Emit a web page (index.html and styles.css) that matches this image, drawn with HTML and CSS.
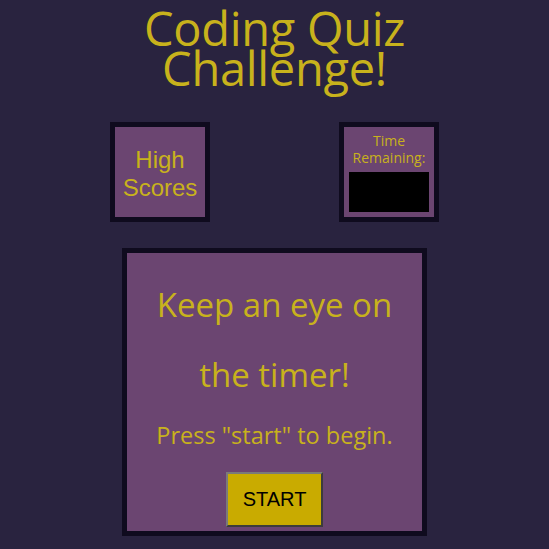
FILE: index.html
```html
<!DOCTYPE html>
<html>
<head>
<meta charset="utf-8">
<link rel="stylesheet" href="styles.css">
</head>
<body>
<header class="title">Coding Quiz<br>Challenge!</header>
<div class="top-row">
  <div class="box scores">High<br>Scores</div>
  <div class="box timer">
    <div class="timer-label">Time<br>Remaining:</div>
    <div class="timer-display"></div>
  </div>
</div>
<main class="card">
  <p class="headline">Keep an eye on</p>
  <p class="headline">the timer!</p>
  <p class="sub">Press "start" to begin.</p>
  <button class="start">START</button>
</main>
</body>
</html>
```
FILE: styles.css
```css
html, body {
  margin: 0;
  padding: 0;
  background: #29233f;
  height: 100%;
}
body {
  font-family: "Open Sans", "Noto Sans", sans-serif;
  color: #c8b21c;
}
.title {
  text-align: center;
  font-size: 47px;
  line-height: 40px;
  padding-top: 8px;
  letter-spacing: -0.3px;
}
.top-row {
  display: flex;
  justify-content: center;
  gap: 129px;
  margin-top: 34px;
}
.box {
  box-sizing: border-box;
  width: 100px;
  height: 100px;
  border: 5px solid #0f0b1e;
  background: #6b4571;
}
.scores {
  font-family: "Liberation Sans", Arial, sans-serif;
  font-size: 24px;
  line-height: 28px;
  text-align: center;
  padding-top: 19px;
}
.timer {
  display: flex;
  flex-direction: column;
  align-items: center;
  padding-top: 5px;
}
.timer-label {
  font-size: 14px;
  line-height: 17px;
  text-align: center;
}
.timer-display {
  width: 80px;
  height: 40px;
  background: #000;
  margin-top: 6px;
}
.card {
  box-sizing: border-box;
  width: 305px;
  height: 288px;
  margin: 26px auto 0;
  border: 5px solid #0f0b1e;
  background: #6b4571;
  display: flex;
  flex-direction: column;
  align-items: center;
  padding-top: 17px;
}
.card p {
  margin: 0;
}
.headline {
  font-size: 33px;
  line-height: 70px;
}
.sub {
  font-size: 23.5px;
  line-height: 50px;
}
.start {
  margin-top: 12px;
  width: 97px;
  height: 55px;
  background: #c9ab00;
  border: 2px solid;
  border-color: #7a7a7a #3c3c3c #3c3c3c #7a7a7a;
  font-family: "Liberation Sans", Arial, sans-serif;
  font-size: 20px;
  color: #000;
  padding: 0;
}
```
